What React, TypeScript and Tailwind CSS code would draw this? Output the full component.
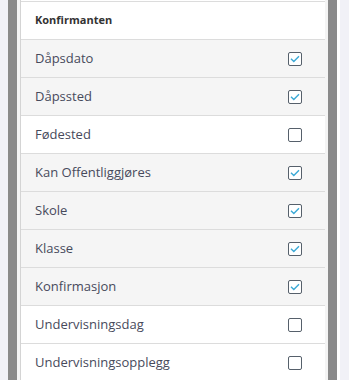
import React from "react";

const rows: { label: string; checked: boolean }[] = [
  { label: "Dåpsdato", checked: true },
  { label: "Dåpssted", checked: true },
  { label: "Fødested", checked: false },
  { label: "Kan Offentliggjøres", checked: true },
  { label: "Skole", checked: true },
  { label: "Klasse", checked: true },
  { label: "Konfirmasjon", checked: true },
  { label: "Undervisningsdag", checked: false },
  { label: "Undervisningsopplegg", checked: false },
];

function Box({ checked }: { checked: boolean }) {
  return (
    <div className="w-[14px] h-[14px] border border-[#56606b] rounded-[2px] bg-white flex items-center justify-center">
      {checked && (
        <svg width="10" height="8" viewBox="0 0 10 8" fill="none">
          <path d="M1 3.8 L3.8 6.5 L9 1.2" stroke="#3aa9d6" strokeWidth="1.4" />
        </svg>
      )}
    </div>
  );
}

export default function App() {
  return (
    <div
      className="w-[349px] h-[380px] overflow-hidden flex bg-[#f1f1f7]"
      style={{ fontFamily: '"Open Sans", sans-serif' }}
    >
      <div className="w-[8px] shrink-0" />
      <div className="w-[9px] shrink-0 bg-[#8a8a8a]" />
      <div className="w-[3px] shrink-0 bg-[#f4f4f4]" />
      <div className="w-[305px] shrink-0 bg-white border-l border-[#d4d4d4] pt-[1px]">
        <div className="border-t border-[#dcdcdc] h-[39px] border-b flex items-center pl-[14px] text-[11px] font-bold text-[#333]">
          Konfirmanten
        </div>
        {rows.map((r) => (
          <div
            key={r.label}
            className={`h-[38px] border-b border-[#dcdcdc] flex items-center justify-between pl-[14px] pr-[23px] text-[13px] text-[#474a5c] ${
              r.checked ? "bg-[#f5f5f5]" : "bg-white"
            }`}
          >
            <span>{r.label}</span>
            <Box checked={r.checked} />
          </div>
        ))}
      </div>
      <div className="w-[3px] shrink-0 bg-[#f4f4f4]" />
      <div className="w-[9px] shrink-0 bg-[#8a8a8a]" />
      <div className="w-[3px] shrink-0 bg-white" />
      <div className="flex-1" />
    </div>
  );
}
